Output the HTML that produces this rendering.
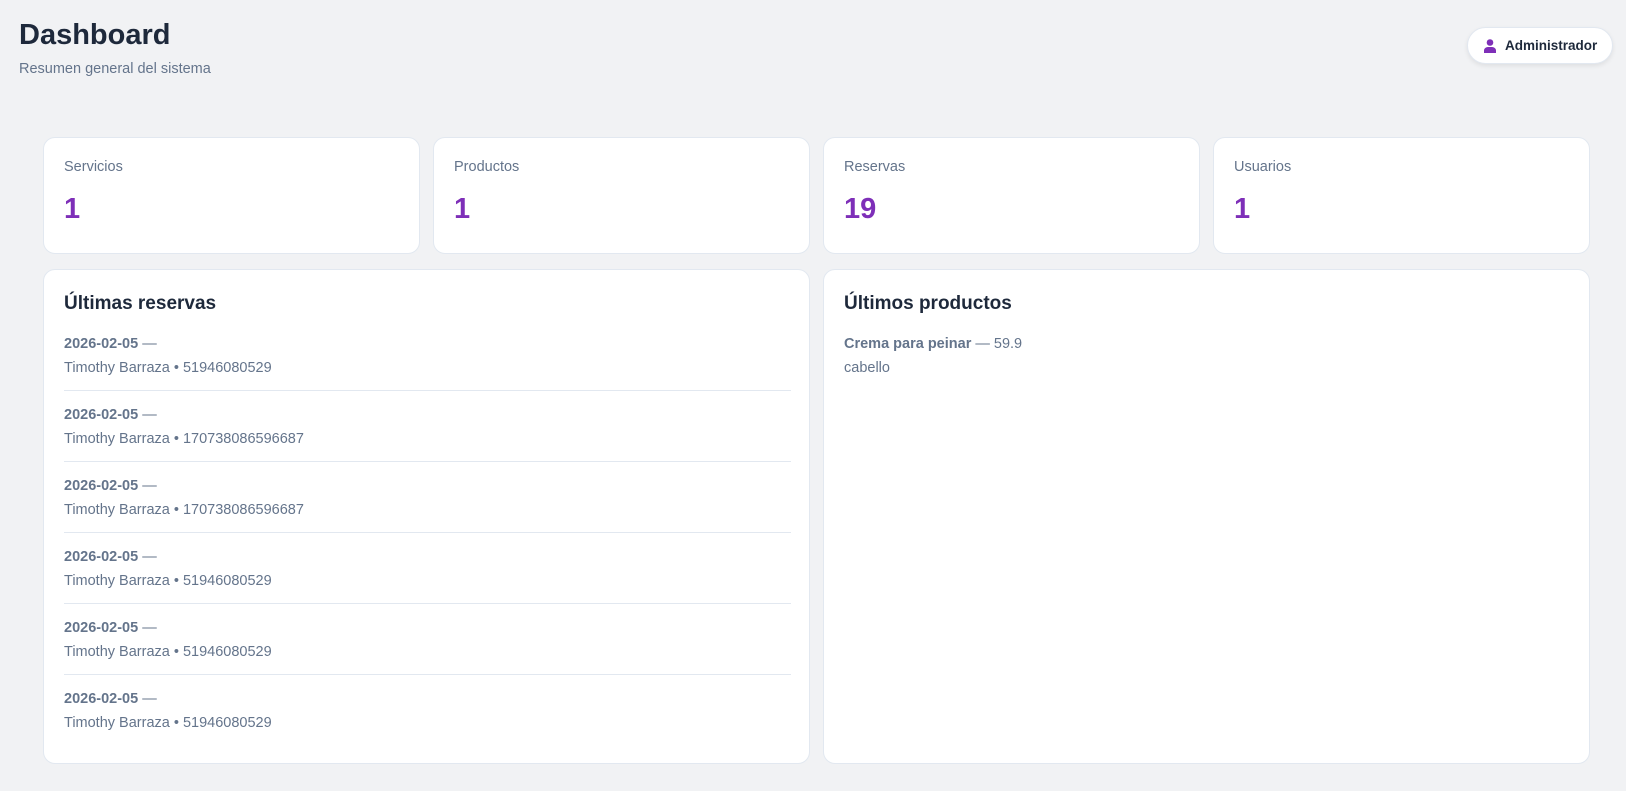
<!DOCTYPE html>
<html><head><meta charset="utf-8"><style>
*{box-sizing:border-box;margin:0;padding:0}
body{width:1626px;height:791px;background:#f1f2f4;font-family:"Liberation Sans",sans-serif;color:#64748b;position:relative;overflow:hidden}
h1{position:absolute;left:19px;top:16px;font-size:29px;line-height:38px;font-weight:700;color:#1e293b}
.sub{position:absolute;left:19px;top:60px;font-size:14.5px;line-height:18px}
.btn{position:absolute;left:1467px;top:27px;width:146px;height:37px;background:#fff;border:1px solid #e2e8f0;border-radius:19px;box-shadow:0 2px 5px rgba(0,0,0,.08);font-size:13.5px;font-weight:700;color:#1e293b;padding:10px 0 0 37px}
.btn svg{position:absolute;left:16px;top:11px}
.card{position:absolute;background:#fff;border:1px solid #e2e8f0;border-radius:12px}
.stat{top:137px;width:377px;height:117px;padding:19px 20px}
.stat .l{font-size:14.5px;line-height:20px}
.stat .v{font-size:29px;line-height:36px;font-weight:700;color:#7e2fb8;margin-top:14px}
.big{top:269px;height:495px;padding:22px 20px;width:767px}
h2{font-size:19px;line-height:24px;font-weight:700;color:#1e293b;margin-bottom:12px}
.row{padding:12px 0 10px;border-bottom:1px solid #e2e8f0;font-size:14.5px;line-height:24px;width:727px}
.row:first-of-type{padding-top:4px}
.row:last-child{border-bottom:none}
b{font-weight:700}
</style></head><body>
<h1>Dashboard</h1>
<div class="sub">Resumen general del sistema</div>
<div class="btn"><svg width="12" height="14" viewBox="0 0 12 14"><circle cx="6" cy="3.5" r="3.3" fill="#7e2fb8"/><path d="M0 14v-2.5C0 9.5 2 8 4 8h4c2 0 4 1.5 4 3.5V14z" fill="#7e2fb8"/></svg>Administrador</div>
<div class="card stat" style="left:43px"><div class="l">Servicios</div><div class="v">1</div></div>
<div class="card stat" style="left:433px"><div class="l">Productos</div><div class="v">1</div></div>
<div class="card stat" style="left:823px"><div class="l">Reservas</div><div class="v">19</div></div>
<div class="card stat" style="left:1213px"><div class="l">Usuarios</div><div class="v">1</div></div>
<div class="card big" style="left:43px">
<h2>Últimas reservas</h2>
<div class="row"><b>2026-02-05</b> —<br>Timothy Barraza • 51946080529</div>
<div class="row"><b>2026-02-05</b> —<br>Timothy Barraza • 170738086596687</div>
<div class="row"><b>2026-02-05</b> —<br>Timothy Barraza • 170738086596687</div>
<div class="row"><b>2026-02-05</b> —<br>Timothy Barraza • 51946080529</div>
<div class="row"><b>2026-02-05</b> —<br>Timothy Barraza • 51946080529</div>
<div class="row"><b>2026-02-05</b> —<br>Timothy Barraza • 51946080529</div>
</div>
<div class="card big" style="left:823px">
<h2>Últimos productos</h2>
<div class="row" style="border:none"><b>Crema para peinar</b> — 59.9<br>cabello</div>
</div>
</body></html>
